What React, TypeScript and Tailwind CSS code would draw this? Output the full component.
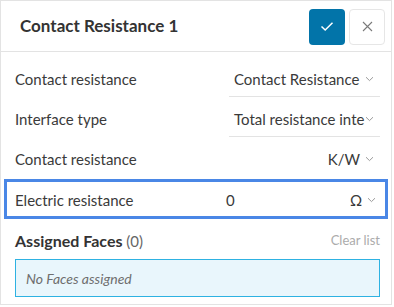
import React from "react";

function Chevron() {
  return (
    <svg width="9" height="6" viewBox="0 0 9 6" className="shrink-0">
      <path d="M1 1.2 L4.5 4.6 L8 1.2" fill="none" stroke="#9a9a9a" strokeWidth="1" />
    </svg>
  );
}

function SelectRow({ label, value }: { label: string; value: string }) {
  return (
    <div className="flex h-[40px] items-center justify-between">
      <span className="text-[15px] text-[#3a3a3a]">{label}</span>
      <div className="flex h-[36px] w-[151px] items-center justify-between border-b border-[#e3e3e3] pl-[5px] pr-[6px] pt-[1px]">
        <span className="whitespace-nowrap text-[15px] text-[#3a3a3a]">{value}</span>
        <Chevron />
      </div>
    </div>
  );
}

export default function App() {
  return (
    <div
      className="h-[305px] w-[392px] border border-[#e3e3e3] bg-white"
      style={{ fontFamily: "Lato, 'Noto Sans', sans-serif" }}
    >
      <div className="flex h-[51px] items-center justify-between border-b border-[#e3e3e3] pl-[19px] pr-[6px]">
        <span className="text-[17px] font-bold text-[#333333]">Contact Resistance 1</span>
        <div className="flex gap-[4px] pt-[1px]">
          <button className="flex h-[36px] w-[36px] items-center justify-center rounded-[4px] bg-[#0274a9]">
            <svg width="14" height="11" viewBox="0 0 14 11">
              <path d="M1.5 5.5 L5.2 9 L12.5 1.8" fill="none" stroke="white" strokeWidth="1.5" />
            </svg>
          </button>
          <button className="flex h-[36px] w-[36px] items-center justify-center rounded-[4px] border border-[#e6e6e6] bg-white">
            <svg width="11" height="11" viewBox="0 0 11 11">
              <path d="M1 1 L10 10 M10 1 L1 10" fill="none" stroke="#7a7a7a" strokeWidth="1.1" />
            </svg>
          </button>
        </div>
      </div>
      <div className="pl-[14px] pr-[11px] pt-[7px]">
        <SelectRow label="Contact resistance" value="Contact Resistance" />
        <SelectRow label="Interface type" value="Total resistance inte" />
        <div className="flex h-[40px] items-center justify-between">
          <span className="text-[15px] text-[#3a3a3a]">Contact resistance</span>
          <div className="flex items-center gap-[5px] pr-[6px]">
            <span className="text-[15px] text-[#3a3a3a]">K/W</span>
            <Chevron />
          </div>
        </div>
        <div className="-ml-[11px] -mr-[8px] flex h-[40px] items-center border-[3px] border-[#4a87e6] pl-[8px] pr-[3px] pt-[2px]">
          <span className="w-[207px] text-[15px] text-[#3a3a3a]">Electric resistance</span>
          <span className="flex-1 pl-[4px] text-[15px] text-[#3a3a3a]">0</span>
          <div className="flex items-center gap-[5px] pr-[6px]">
            <span className="text-[15px] text-[#3a3a3a]">Ω</span>
            <Chevron />
          </div>
        </div>
        <div className="mt-[10px] flex items-center justify-between">
          <span className="text-[16px] font-bold text-[#333333]">
            Assigned Faces <span className="text-[15px] font-normal text-[#666666]">(0)</span>
          </span>
          <span className="text-[13px] text-[#ababab]">Clear list</span>
        </div>
        <div className="mt-[6px] flex h-[38px] items-center border border-[#2eb2e2] bg-[#e9f6fc] pl-[10px]">
          <span className="text-[14px] italic text-[#6e6e6e]">No Faces assigned</span>
        </div>
      </div>
    </div>
  );
}
